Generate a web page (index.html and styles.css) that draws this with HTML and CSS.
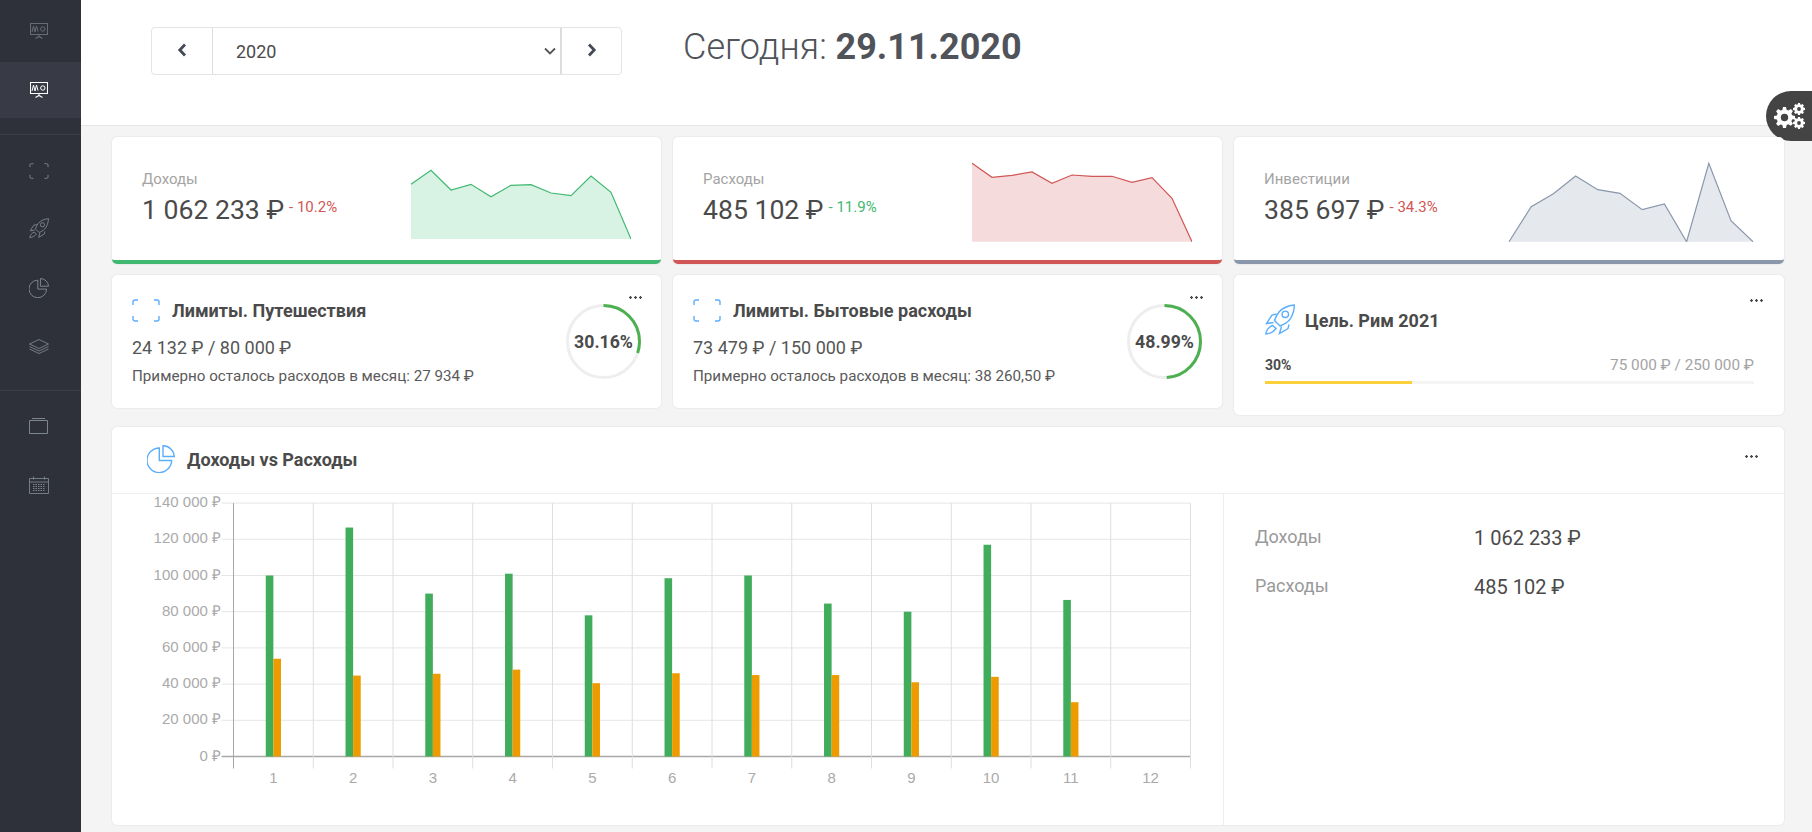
FILE: index.html
```html
<!DOCTYPE html>
<html lang="ru">
<head>
<meta charset="utf-8">
<title>Сводка</title>
<link rel="stylesheet" href="styles.css">
</head>
<body>
<svg class="defs" width="0" height="0">
  <symbol id="i-board" viewBox="0 0 18 16">
    <path d="M.5.5h17v11H.5zM9 11.500v2M5.500 15.500 9 13.500l3.500 2" fill="none" stroke="currentColor" stroke-width="1.100"/>
    <path d="M2 9l1.500-6L5 9l1.500-6L8 8.500" fill="none" stroke="currentColor" stroke-width="1"/>
    <circle cx="12.800" cy="6" r="2.200" fill="none" stroke="currentColor" stroke-width="1"/>
  </symbol>
  <symbol id="i-frame" viewBox="0 0 28 23">
    <path d="M1 6V3a2 2 0 0 1 2-2h3M22 1h3a2 2 0 0 1 2 2v3M27 17v3a2 2 0 0 1-2 2h-3M6 22H3a2 2 0 0 1-2-2v-3" fill="none" stroke="currentColor" stroke-width="1.400"/>
  </symbol>
  <symbol id="i-rocket" viewBox="0 0 30 32">
    <path d="M29.500 1C24 1.500 18 3.500 14 8c-2 2.500-3.500 5.500-4.500 8.500L15 22c3-1 6-2.500 8.500-5C27.500 13 29 7 29.500 1Z" fill="none" stroke="currentColor" stroke-width="1.400"/>
    <circle cx="20.300" cy="10.300" r="3.200" fill="none" stroke="currentColor" stroke-width="1.400"/>
    <path d="M11.500 10 7 11 1.500 19.500 8.500 18.500M24 20.500 23 24.500 14.500 29.500 16.500 22.500M7.500 21.500C4 23 1.500 26 .8 30 4.500 29.800 9 27.500 11 24.500Z" fill="none" stroke="currentColor" stroke-width="1.400"/>
  </symbol>
  <symbol id="i-pie" viewBox="0 0 28 28">
    <path d="M12.300 3A12.300 12.300 0 1 0 24.600 15.500H12.300Z" fill="none" stroke="currentColor" stroke-width="1.400"/>
    <path d="M16 .8V11.500H27.300A11.300 11.300 0 0 0 16 .8Z" fill="none" stroke="currentColor" stroke-width="1.400"/>
  </symbol>
  <symbol id="i-layers" viewBox="0 0 20 15">
    <path d="M10 .5 19.500 5 10 9.500.5 5ZM.5 7.500 10 12l9.500-4.500M.5 10 10 14.500l9.500-4.500" fill="none" stroke="currentColor" stroke-width=".9"/>
  </symbol>
  <symbol id="i-window" viewBox="0 0 19 16">
    <path d="M.5 2.500h18v13H.5zM3 .5h13" fill="none" stroke="currentColor"/>
  </symbol>
  <symbol id="i-cal" viewBox="0 0 20 18">
    <path d="M.5 2.500h19v15H.5zM.5 6h19M4.500.5v3M15.500.5v3" fill="none" stroke="currentColor" stroke-width=".9"/>
    <path d="M4 8.500h12M4 10.500h12M4 12.500h12M4 14.500h12" fill="none" stroke="currentColor" stroke-dasharray="1.500 1"/>
  </symbol>
  <symbol id="i-gears" viewBox="0 0 32 26">
    <path d="M10 4h3l.6 2.800 1.800.7 2.400-1.500 2.100 2.100-1.500 2.400.7 1.800 2.900.6v3l-2.900.6-.7 1.800 1.500 2.400-2.100 2.100-2.400-1.500-1.800.7L13 25h-3l-.6-2.900-1.800-.7-2.400 1.500-2.100-2.100 1.500-2.400-.7-1.800-2.900-.6v-3l2.900-.6.7-1.800-1.500-2.400 2.100-2.100 2.400 1.500 1.800-.7Zm1.500 6.800a3.700 3.700 0 1 0 0 7.400 3.700 3.700 0 0 0 0-7.400Z" fill="currentColor" fill-rule="evenodd"/>
    <path d="M25 0h2l.3 1.400 1 .4 1.200-.8 1.400 1.400-.8 1.200.4 1 1.500.4v2l-1.500.3-.4 1 .8 1.300-1.400 1.400-1.200-.8-1 .4L27 12h-2l-.3-1.400-1-.4-1.200.8-1.400-1.400.8-1.300-.4-1-1.500-.3v-2l1.500-.4.4-1-.8-1.200L22.500 1l1.200.8 1-.4Zm1 4.100a1.900 1.900 0 1 0 0 3.800 1.900 1.900 0 0 0 0-3.800Z" fill="currentColor" fill-rule="evenodd"/>
    <path d="M25 14h2l.3 1.400 1 .4 1.200-.8 1.400 1.400-.8 1.200.4 1 1.500.4v2l-1.500.3-.4 1 .8 1.300-1.400 1.400-1.200-.8-1 .4L27 26h-2l-.3-1.400-1-.4-1.200.8-1.400-1.400.8-1.300-.4-1-1.500-.3v-2l1.500-.4.4-1-.8-1.200 1.400-1.400 1.200.8 1-.4Zm1 4.100a1.900 1.900 0 1 0 0 3.800 1.900 1.900 0 0 0 0-3.800Z" fill="currentColor" fill-rule="evenodd"/>
  </symbol>
</svg>

<div class="app">
  <nav class="sidebar">
    <a class="nav-item nav-first"><svg width="18" height="16"><use href="#i-board"/></svg></a>
    <a class="nav-item nav-active"><svg width="18" height="16"><use href="#i-board"/></svg></a>
    <hr class="nav-sep">
    <a class="nav-item nav-frame"><svg width="20" height="16"><use href="#i-frame"/></svg></a>
    <a class="nav-item"><svg width="20" height="21"><use href="#i-rocket"/></svg></a>
    <a class="nav-item"><svg width="20" height="20"><use href="#i-pie"/></svg></a>
    <a class="nav-item"><svg width="20" height="15"><use href="#i-layers"/></svg></a>
    <hr class="nav-sep nav-sep-low">
    <a class="nav-item"><svg width="19" height="16"><use href="#i-window"/></svg></a>
    <a class="nav-item"><svg width="20" height="18"><use href="#i-cal"/></svg></a>
  </nav>

  <div class="main">
    <header class="topbar">
      <div class="year-picker">
        <button class="yp-btn"><svg width="10" height="14" viewBox="0 0 10 14"><path d="M8 1.500 2.800 7 8 12.500" fill="none" stroke="#444a55" stroke-width="2.800"/></svg></button>
        <div class="yp-select">2020
          <svg width="12" height="8" viewBox="0 0 12 8"><path d="M1 1.500 6 6.500l5-5" fill="none" stroke="#555" stroke-width="1.800"/></svg>
        </div>
        <button class="yp-btn yp-next"><svg width="10" height="14" viewBox="0 0 10 14"><path d="M2 1.500 7.200 7 2 12.500" fill="none" stroke="#444a55" stroke-width="2.800"/></svg></button>
      </div>
      <div class="today">Сегодня: <b>29.11.2020</b></div>
    </header>
    <button class="gear-tab"><svg width="32" height="26"><use href="#i-gears"/></svg></button>

    <div class="content">
      <section class="grid">
        <div class="card stat stat-green">
          <div class="stat-text">
            <div class="stat-label">Доходы</div>
            <div class="stat-value">1 062 233 ₽<span class="delta bad">- 10.2%</span></div>
          </div>
          <svg class="spark" width="222" height="72" viewBox="409 169 222 72">
            <path d="M411 184.300 431 170.300 451 190 471 184.300 491 196.700 511 185.300 531 184.700 551 193 571 195.700 591 176 611 192.300 631 239H411Z" fill="#d8f2e3"/>
            <path d="M411 184.300 431 170.300 451 190 471 184.300 491 196.700 511 185.300 531 184.700 551 193 571 195.700 591 176 611 192.300 631 239" fill="none" stroke="#41b871" stroke-width="1.200"/>
          </svg>
        </div>
        <div class="card stat stat-red">
          <div class="stat-text">
            <div class="stat-label">Расходы</div>
            <div class="stat-value">485 102 ₽<span class="delta good">- 11.9%</span></div>
          </div>
          <svg class="spark" width="222" height="80" viewBox="970 162 222 80">
            <path d="M972 163.300 992 177.300 1012 175.300 1032 172 1052 183.300 1072 175 1092 176.300 1112 176.300 1132 182.300 1152 177.700 1172 198.300 1192 241.700H972Z" fill="#f5dbdb"/>
            <path d="M972 163.300 992 177.300 1012 175.300 1032 172 1052 183.300 1072 175 1092 176.300 1112 176.300 1132 182.300 1152 177.700 1172 198.300 1192 241.700" fill="none" stroke="#d15656" stroke-width="1.200"/>
          </svg>
        </div>
        <div class="card stat stat-gray">
          <div class="stat-text">
            <div class="stat-label">Инвестиции</div>
            <div class="stat-value">385 697 ₽<span class="delta bad">- 34.3%</span></div>
          </div>
          <svg class="spark" width="246" height="80" viewBox="1508 162 246 80">
            <path d="M1509 241.700 1531.200 206.700 1553.400 193.700 1575.600 176 1597.800 189.700 1620 193.300 1642.200 209.700 1664.400 204 1686.600 241.700 1708.800 163.300 1731 220.700 1753 241.700Z" fill="#e5e8ed"/>
            <path d="M1509 241.700 1531.200 206.700 1553.400 193.700 1575.600 176 1597.800 189.700 1620 193.300 1642.200 209.700 1664.400 204 1686.600 241.700 1708.800 163.300 1731 220.700 1753 241.700" fill="none" stroke="#8a97ab" stroke-width="1.200"/>
          </svg>
        </div>

        <div class="card limit">
          <div class="limit-text">
            <h3 class="card-title"><svg class="frame-icon" width="28" height="23"><use href="#i-frame"/></svg>Лимиты. Путешествия</h3>
            <div class="limit-sum">24 132 ₽ / 80 000 ₽</div>
            <div class="limit-note">Примерно осталось расходов в месяц: 27 934 ₽</div>
          </div>
          <div class="ring">
            <svg width="75" height="75" viewBox="0 0 75 75">
              <circle cx="37.500" cy="37.500" r="36" fill="none" stroke="#eeeeee" stroke-width="3"/>
              <circle cx="37.500" cy="37.500" r="36" fill="none" stroke="#4caf50" stroke-width="3" pathLength="100" stroke-dasharray="30.160 100" transform="rotate(-90 37.500 37.500)"/>
            </svg>
            <span>30.16%</span>
          </div>
          <span class="dots"></span>
        </div>
        <div class="card limit">
          <div class="limit-text">
            <h3 class="card-title"><svg class="frame-icon" width="28" height="23"><use href="#i-frame"/></svg>Лимиты. Бытовые расходы</h3>
            <div class="limit-sum">73 479 ₽ / 150 000 ₽</div>
            <div class="limit-note">Примерно осталось расходов в месяц: 38 260,50 ₽</div>
          </div>
          <div class="ring">
            <svg width="75" height="75" viewBox="0 0 75 75">
              <circle cx="37.500" cy="37.500" r="36" fill="none" stroke="#eeeeee" stroke-width="3"/>
              <circle cx="37.500" cy="37.500" r="36" fill="none" stroke="#4caf50" stroke-width="3" pathLength="100" stroke-dasharray="48.990 100" transform="rotate(-90 37.500 37.500)"/>
            </svg>
            <span>48.99%</span>
          </div>
          <span class="dots"></span>
        </div>
        <div class="card goal">
          <h3 class="card-title goal-title"><svg class="rocket-icon" width="30" height="32"><use href="#i-rocket"/></svg>Цель. Рим 2021</h3>
          <div class="goal-row">
            <b>30%</b>
            <span>75 000 ₽ / 250 000 ₽</span>
          </div>
          <div class="progress"><div class="progress-bar"></div></div>
          <span class="dots"></span>
        </div>
      </section>

      <section class="card panel">
        <div class="panel-head">
          <h3 class="card-title"><svg class="pie-icon" width="28" height="28"><use href="#i-pie"/></svg>Доходы vs Расходы</h3>
          <span class="dots"></span>
        </div>
        <div class="panel-body">
          <div class="chart-wrap">
            <svg class="chart" id="chart" width="1112" height="331" viewBox="112 494 1112 331"></svg>
          </div>
          <div class="totals">
            <div class="totals-row"><span class="totals-label">Доходы</span><span class="totals-val">1 062 233 ₽</span></div>
            <div class="totals-row"><span class="totals-label">Расходы</span><span class="totals-val">485 102 ₽</span></div>
          </div>
        </div>
      </section>
    </div>
  </div>
</div>

<script>
// столбики за год
const income = [100000, 126500, 90000, 101000, 78000, 98500, 100000, 84500, 80000, 117000, 86500];
const costs = [54000, 44700, 45700, 48000, 40500, 46000, 45000, 45000, 41000, 44000, 30000];
const x0 = 233.5, y0 = 756.5, stepx = 79.75, stepy = 36.2;
let s = "";
for (let i = 0; i <= 7; i++) {
  const y = y0 - i * stepy;
  const color = i == 0 ? "#a8a8a8" : "#e6e6e6";
  s += `<line x1="${x0 - 12}" x2="${x0 + 12 * stepx}" y1="${y}" y2="${y}" stroke="${color}" stroke-width="${i == 0 ? 1.4 : 1}"/>`;
  const label = i == 0 ? "0 ₽" : (i * 20) + " 000 ₽";
  s += `<text class="axis" x="${x0 - 12.5}" y="${y + 4}" text-anchor="end">${label}</text>`;
}
for (let i = 0; i <= 12; i++) {
  const x = x0 + i * stepx;
  const color = i == 0 ? "#a8a8a8" : "#dedede";
  s += `<line x1="${x}" x2="${x}" y1="${y0 - 7 * stepy}" y2="${y0 + 12}" stroke="${color}"/>`;
  if (i < 12) s += `<text class="axis" x="${x + stepx / 2}" y="${y0 + 26}" text-anchor="middle">${i + 1}</text>`;
}
const h = (v) => v * stepy / 20000;
income.forEach((v, i) => {
  const c = x0 + (i + .5) * stepx;
  s += `<rect x="${c - 7.6}" y="${y0 - h(v)}" width="7.6" height="${h(v)}" fill="#41ad5c"/>`;
  s += `<rect x="${c}" y="${y0 - h(costs[i])}" width="7.6" height="${h(costs[i])}" fill="#ee9b00"/>`;
});
chart.innerHTML = s;
</script>
</body>
</html>
```

FILE: styles.css
```css
* {
  box-sizing: border-box;
}
html, body {
  margin: 0;
  height: 100%;
  overflow: hidden;
}
body {
  font-family: Roboto, "Liberation Sans", sans-serif;
  color: #4a4a4a;
  background: #f4f4f4;
}
.defs {
  position: absolute;
}
.app {
  display: flex;
  height: 832px;
}

/* sidebar */
.sidebar {
  width: 81px;
  flex: none;
  background: #2e313a;
  display: flex;
  flex-direction: column;
}
.nav-item {
  height: 59px;
  flex: none;
  display: flex;
  align-items: center;
  justify-content: center;
  padding-right: 4px;
  color: #7d8590;
}
.nav-first {
  height: 62px;
  color: #666c76;
}
.nav-active {
  height: 56px;
  background: #383b45;
  color: #fff;
}
.nav-frame {
  padding-top: 2px;
}
.nav-sep {
  width: 100%;
  margin: 16px 0 5px;
  border: 0;
  border-top: 1px solid #3c3f49;
}
.nav-sep-low {
  margin-top: 14px;
}

/* top */
.main {
  flex: 1;
  min-width: 0;
  position: relative;
}
.topbar {
  height: 126px;
  background: #fff;
  border-bottom: 1px solid #e6e6e6;
  padding: 27px 0 0 70px;
  display: flex;
  align-items: flex-start;
}
.year-picker {
  width: 471px;
  height: 48px;
  display: flex;
  background: #fff;
  border: 1px solid #e4e4e4;
  border-radius: 4px;
}
.yp-btn {
  width: 60px;
  flex: none;
  background: none;
  border: 0;
  padding: 0;
}
.yp-next {
  width: 59px;
}
.yp-select {
  flex: 1;
  display: flex;
  align-items: center;
  justify-content: space-between;
  padding: 0 4px 0 23px;
  font-size: 18px;
  color: #4a4a4a;
  border-left: 1px solid #ddd;
  border-right: 2px solid #ddd;
}
.today {
  margin: 0 0 0 61px;
  font-size: 36px;
  font-weight: 300;
  line-height: 40px;
  color: #50535a;
}
.today b {
  font-weight: 700;
}
.gear-tab {
  position: absolute;
  right: 0;
  top: 91px;
  width: 46px;
  height: 50px;
  background: #444;
  color: #fff;
  border: 0;
  border-radius: 25px 0 0 25px;
  padding: 0 0 0 7px;
  display: flex;
  align-items: center;
}

/* cards */
.content {
  padding: 11px 28px 0 31px;
}
.grid {
  display: grid;
  grid-template-columns: 549px 549px 550px;
  column-gap: 12px;
  row-gap: 11px;
  align-items: start;
}
.card {
  background: #fff;
  border-radius: 5px;
  box-shadow: 0 0 2px rgba(0, 0, 0, .12);
  position: relative;
}
.stat {
  height: 127px;
  display: flex;
  justify-content: space-between;
  padding: 33px 30px 0 30px;
  border-bottom: 4px solid;
}
.stat-green { border-color: #41b871; }
.stat-red { border-color: #d15656; }
.stat-gray { border-color: #8a97ab; }
.stat-label {
  font-size: 15px;
  color: #a4a4a4;
  line-height: 18px;
}
.stat-value {
  font-size: 26.6px;
  line-height: 36px;
  margin-top: 1px;
  color: #4a4a4a;
}
.delta {
  font-size: 15px;
  margin-left: 5px;
  vertical-align: 7px;
}
.bad { color: #d15656; }
.good { color: #41b871; }
.spark {
  flex: none;
  align-self: flex-start;
  margin-top: -8px;
}
.stat-green .spark { margin-top: -1px; }

.card-title {
  margin: 0;
  font-size: 18px;
  font-weight: 700;
  color: #4a4a4a;
  display: flex;
  align-items: center;
  gap: 12px;
}
.frame-icon, .rocket-icon, .pie-icon {
  color: #5aaefc;
  flex: none;
}
.frame-icon {
  margin-top: 1px;
}
.limit {
  height: 133px;
  display: flex;
  justify-content: space-between;
  padding: 23px 20px 0 20px;
}
.limit-sum {
  font-size: 18px;
  margin-top: 16px;
  line-height: 20px;
  color: #555;
}
.limit-note {
  font-size: 15.2px;
  margin-top: 9px;
  line-height: 18px;
  color: #5a5a5a;
}
.ring {
  position: relative;
  width: 75px;
  height: 75px;
  margin-top: 6px;
  display: grid;
  place-items: center;
  font-size: 17.7px;
  font-weight: 700;
}
.ring svg {
  position: absolute;
  inset: 0;
}
.dots {
  position: absolute;
  right: 19px;
  top: 21px;
  width: 13px;
  height: 3px;
  background: radial-gradient(circle at 1.5px 1.5px, #4a4a4a 1px, transparent 1.5px) 0 0 / 5px 3px repeat-x;
}
.goal {
  height: 140px;
  padding: 29px 30px 0 31px;
}
.goal-title {
  gap: 10px;
}
.goal .dots {
  right: 21px;
  top: 24px;
}
.goal-row {
  display: flex;
  justify-content: space-between;
  align-items: center;
  margin-top: 20px;
  font-size: 14px;
  line-height: 18px;
}
.goal-row span {
  color: #a4a4a4;
  font-size: 15.3px;
}
.progress {
  height: 3px;
  margin-top: 7px;
  background: #f4f4f4;
}
.progress-bar {
  width: 30%;
  height: 100%;
  background: #fbd13b;
}

/* big panel */
.panel {
  margin-top: 12px;
  height: 398px;
}
.panel-head {
  height: 67px;
  padding: 18px 0 0 35px;
  border-bottom: 1px solid #eee;
}
.panel-head .dots {
  right: 26px;
  top: 28px;
}
.panel-body {
  display: flex;
  height: 331px;
}
.chart-wrap {
  width: 1112px;
  flex: none;
  border-right: 1px solid #eee;
}
.chart {
  display: block;
}
.axis {
  font-family: "Liberation Sans", Arial, sans-serif;
  font-size: 15px;
  fill: #aaa;
}
.totals {
  padding: 31px 0 0 31px;
}
.totals-row {
  display: flex;
  align-items: center;
  height: 26px;
  margin-bottom: 23px;
  font-size: 20px;
  color: #4a4a4a;
}
.totals-label {
  width: 219px;
  padding-bottom: 3px;
  font-size: 18px;
  color: #999;
}
```
